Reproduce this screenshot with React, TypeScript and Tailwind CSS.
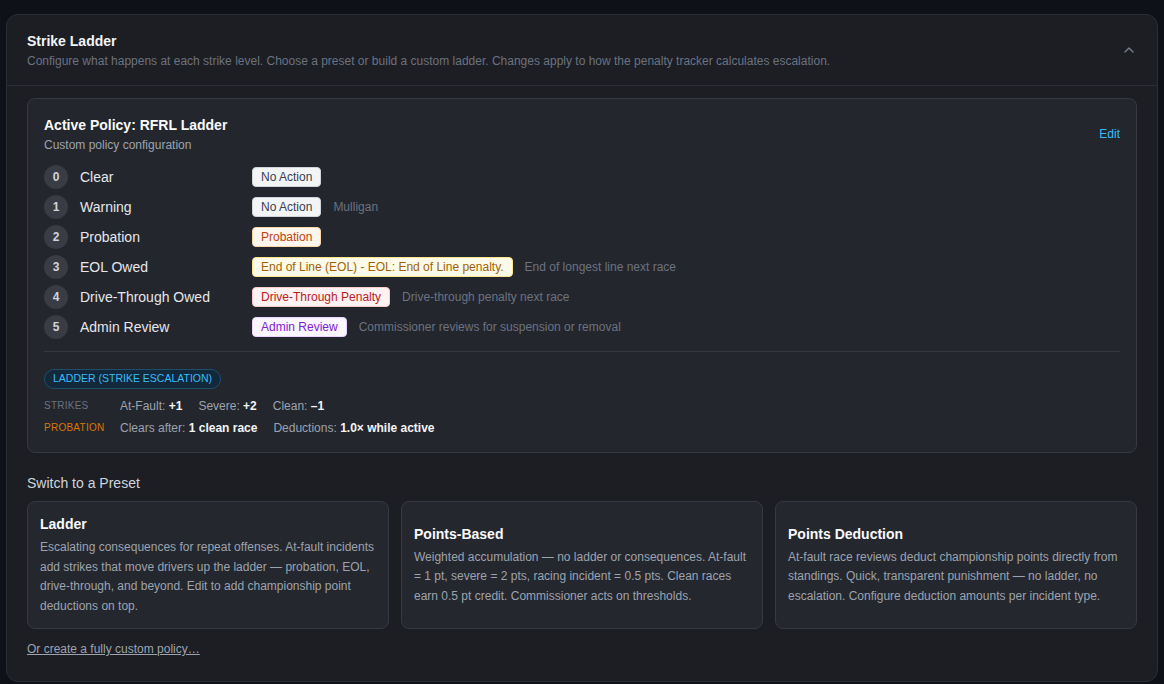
import React from "react";

const rows = [
  { n: 0, label: "Clear", badge: "No Action", cls: "bg-[#f3f4f6] text-[#374151] border-[#d1d5db]", note: "" },
  { n: 1, label: "Warning", badge: "No Action", cls: "bg-[#f3f4f6] text-[#374151] border-[#d1d5db]", note: "Mulligan" },
  { n: 2, label: "Probation", badge: "Probation", cls: "bg-[#fff7ed] text-[#c2410c] border-[#fed7aa]", note: "" },
  { n: 3, label: "EOL Owed", badge: "End of Line (EOL) - EOL: End of Line penalty.", cls: "bg-[#fefce8] text-[#a16207] border-[#fde68a]", note: "End of longest line next race" },
  { n: 4, label: "Drive-Through Owed", badge: "Drive-Through Penalty", cls: "bg-[#fef2f2] text-[#b91c1c] border-[#fecaca]", note: "Drive-through penalty next race" },
  { n: 5, label: "Admin Review", badge: "Admin Review", cls: "bg-[#faf5ff] text-[#7e22ce] border-[#e9d5ff]", note: "Commissioner reviews for suspension or removal" },
];

const presets = [
  {
    title: "Ladder",
    desc: "Escalating consequences for repeat offenses. At-fault incidents add strikes that move drivers up the ladder — probation, EOL, drive-through, and beyond. Edit to add championship point deductions on top.",
  },
  {
    title: "Points-Based",
    desc: "Weighted accumulation — no ladder or consequences. At-fault = 1 pt, severe = 2 pts, racing incident = 0.5 pts. Clean races earn 0.5 pt credit. Commissioner acts on thresholds.",
  },
  {
    title: "Points Deduction",
    desc: "At-fault race reviews deduct championship points directly from standings. Quick, transparent punishment — no ladder, no escalation. Configure deduction amounts per incident type.",
  },
];

export default function App() {
  return (
    <div
      className="min-h-[684px] bg-[#0f1118] px-[6px] pt-[14px] pb-[3px]"
      style={{ fontFamily: '"Liberation Sans", Arial, sans-serif' }}
    >
      <div className="rounded-xl border border-[#2b2e36] bg-[#1c1e24]">
        <div className="flex items-center justify-between border-b border-[#2b2e36] px-5 py-4">
          <div>
            <div className="text-sm leading-5 font-bold text-[#f3f4f6]">Strike Ladder</div>
            <div className="mt-0.5 text-xs leading-4 text-[#6b7280]">
              Configure what happens at each strike level. Choose a preset or build a custom ladder. Changes apply to how the penalty tracker calculates escalation.
            </div>
          </div>
          <svg width="16" height="16" viewBox="0 0 24 24" fill="none" stroke="#7b8090" strokeWidth="2" strokeLinecap="round" strokeLinejoin="round">
            <path d="m18 15-6-6-6 6" />
          </svg>
        </div>

        <div className="px-5 pt-3 pb-6">
          <div className="rounded-lg border border-[#363942] bg-[#24262d] p-4">
            <div className="flex items-center justify-between">
              <div>
                <div className="text-sm leading-5 font-bold text-[#f9fafb]">Active Policy: RFRL Ladder</div>
                <div className="mt-0.5 text-xs leading-4 text-[#9ca3af]">Custom policy configuration</div>
              </div>
              <div className="text-xs text-[#38bdf8]">Edit</div>
            </div>

            <div className="mt-3 flex flex-col gap-1.5">
              {rows.map((r) => (
                <div key={r.n} className="flex h-6 items-center gap-3">
                  <div className="flex h-6 w-6 items-center justify-center rounded-full bg-[#393c44] text-xs font-bold text-[#d1d5db]">
                    {r.n}
                  </div>
                  <div className="w-40 text-sm text-[#e5e7eb]">{r.label}</div>
                  <div className={`flex h-5 items-center rounded border px-2 text-xs ${r.cls}`}>{r.badge}</div>
                  {r.note && <div className="text-xs text-[#6b7280]">{r.note}</div>}
                </div>
              ))}
            </div>

            <div className="mt-3 border-t border-[#363942] pt-[17px]">
              <div className="flex">
                <div className="flex h-5 items-center rounded-full border border-[#1d4f6b] bg-[#13283a] px-2 text-[10.5px] text-[#38bdf8]">
                  LADDER (STRIKE ESCALATION)
                </div>
              </div>
              <div className="mt-[9px] flex flex-col gap-1.5">
                <div className="flex items-center gap-3 text-xs leading-4">
                  <div className="w-16 text-[10px] tracking-wide text-[#6b7280]">STRIKES</div>
                  <div className="flex gap-4 text-[#9ca3af]">
                    <span>At-Fault: <b className="text-[#f3f4f6]">+1</b></span>
                    <span>Severe: <b className="text-[#f3f4f6]">+2</b></span>
                    <span>Clean: <b className="text-[#f3f4f6]">–1</b></span>
                  </div>
                </div>
                <div className="flex items-center gap-3 text-xs leading-4">
                  <div className="w-16 text-[10px] tracking-wide text-[#d97706]">PROBATION</div>
                  <div className="flex gap-4 text-[#9ca3af]">
                    <span>Clears after: <b className="text-[#f3f4f6]">1 clean race</b></span>
                    <span>Deductions: <b className="text-[#f3f4f6]">1.0× while active</b></span>
                  </div>
                </div>
              </div>
            </div>
          </div>

          <div className="mt-5 text-sm leading-5 text-[#d1d5db]">Switch to a Preset</div>
          <div className="mt-2 grid grid-cols-3 gap-3">
            {presets.map((p) => (
              <div key={p.title} className="flex flex-col justify-center rounded-lg border border-[#363942] bg-[#25272e] p-3">
                <div className="text-sm leading-5 font-bold text-[#f9fafb]">{p.title}</div>
                <div className="mt-1 text-xs leading-relaxed text-[#9ca3af]">{p.desc}</div>
              </div>
            ))}
          </div>
          <div className="mt-3 text-xs leading-4 text-[#9ca3af] underline">Or create a fully custom policy…</div>
        </div>
      </div>
    </div>
  );
}
